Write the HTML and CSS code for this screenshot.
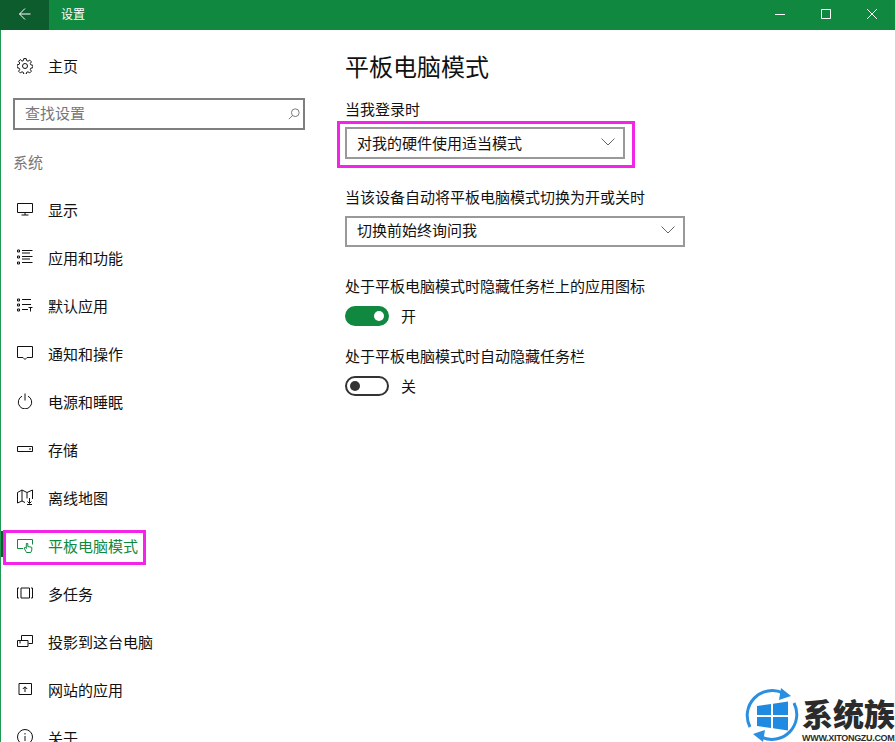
FILE: index.html
```html
<!DOCTYPE html>
<html lang="zh-CN">
<head>
  <meta charset="UTF-8" />
  <title>设置</title>
  <link rel="stylesheet" href="styles.css">
</head>
<body>
  <header class="titlebar">
    <div class="back">
      <svg width="14" height="14" viewBox="0 0 14 14"><path d="M1.500 7h11M7 1.500L1.500 7 7 12.500" /></svg>
    </div>
    <div class="app-title">设置</div>
    <div class="win-btns">
      <svg width="12" height="12" viewBox="0 0 12 12"><path d="M1 6.500h10" /></svg>
      <svg width="12" height="12" viewBox="0 0 12 12"><path d="M1.500 1.500h9v9h-9z" /></svg>
      <svg width="12" height="12" viewBox="0 0 12 12"><path d="M1 1l10 10M11 1L1 11" /></svg>
    </div>
  </header>

  <div class="window">
    <aside class="sidebar">
      <a class="nav-item home">
        <svg class="icon" viewBox="0 0 16 16"><circle cx="8" cy="8" r="2.500" /><path d="M6.800.6h2.400l.4 2 1.400.6 1.700-1.100 1.700 1.700-1.100 1.700.6 1.400 2 .4v2.400l-2 .4-.6 1.400 1.100 1.700-1.700 1.700-1.700-1.100-1.400.6-.4 2H6.800l-.4-2-1.400-.6-1.700 1.100-1.700-1.700 1.100-1.700-.6-1.400-2-.4V6.800l2-.4.6-1.400-1.100-1.700 1.700-1.700L5 3.200l1.400-.6z" /></svg>
        <span>主页</span>
      </a>
      <div class="search">
        <span>查找设置</span>
        <svg width="12" height="12" viewBox="0 0 14 14"><circle cx="8.500" cy="5.500" r="4.500" /><path d="M5.500 8.500L1 13" /></svg>
      </div>
      <div class="group-name">系统</div>

      <a class="nav-item">
        <svg class="icon" viewBox="0 0 16 16"><path d="M.5 2.500h15v9H.5zM8 11.500v2.500M4.500 14h7" /></svg>
        <span>显示</span>
      </a>
      <a class="nav-item">
        <svg class="icon" viewBox="0 0 16 16"><path d="M.5 1h2v2h-2zM.5 7h2v2h-2zM.5 13h2v2h-2zM5 1.500h10.500M5 4h8M5 7.500h10.500M5 10h8M5 13.500h10.500" /></svg>
        <span>应用和功能</span>
      </a>
      <a class="nav-item">
        <svg class="icon" viewBox="0 0 16 16"><path d="M.5 2h2v2h-2zM.5 7h2v2h-2zM.5 12h2v2h-2zM5 2.500h9M5 7.500h9M5 12.500h6M11.500 10.500h4M13.500 10.500v4" /></svg>
        <span>默认应用</span>
      </a>
      <a class="nav-item">
        <svg class="icon" viewBox="0 0 16 16"><path d="M.5 1.500h15v11H10l-2 2-2-2H.5z" /></svg>
        <span>通知和操作</span>
      </a>
      <a class="nav-item">
        <svg class="icon" viewBox="0 0 16 16"><path d="M5 3.200a6.700 6.700 0 1 0 6 0M8 .5v7" /></svg>
        <span>电源和睡眠</span>
      </a>
      <a class="nav-item">
        <svg class="icon" viewBox="0 0 16 16"><path d="M.5 5.500h15v5H.5zM12 8h2" /></svg>
        <span>存储</span>
      </a>
      <a class="nav-item">
        <svg class="icon" viewBox="0 0 16 16"><path d="M.5 3.500L5 1l5 2.500L15.500 1v9M.5 3.500V14L5 12l3 1.500M5 1v11M10 3.500v6M12.500 9v5M10.500 12.500l2 2 2-2M10 15.500h5" /></svg>
        <span>离线地图</span>
      </a>
      <a class="nav-item active">
        <svg class="icon" viewBox="0 0 16 16"><path d="M6 11.500H.5v-9h15v5M9 14.500l-2-3.500 1.500-.5.800 1V6.500h1.500v3l4 .8v2.700l-1 2.500H9.500z" /></svg>
        <span>平板电脑模式</span>
        <i class="mark"></i>
      </a>
      <a class="nav-item">
        <svg class="icon" viewBox="0 0 16 16"><path d="M4 3h8.500v10H4zM2 3H.5v10H2M14 3h1.500v10H14" /></svg>
        <span>多任务</span>
      </a>
      <a class="nav-item">
        <svg class="icon" viewBox="0 0 16 16"><path d="M4.500 7V2.500h11v8h-4M.5 7.500h10.500v6H.5zM3 10.500V7.500" /></svg>
        <span>投影到这台电脑</span>
      </a>
      <a class="nav-item">
        <svg class="icon" viewBox="0 0 16 16"><path d="M2 2.500h12.500v11H2zM8 11V6M5.800 8l2.200-2.200L10.200 8" /></svg>
        <span>网站的应用</span>
      </a>
      <a class="nav-item">
        <svg class="icon" viewBox="0 0 16 16"><circle cx="8" cy="8" r="7.500" /><path d="M8 7v5M8 4v1.500" /></svg>
        <span>关于</span>
      </a>
    </aside>

    <main class="content">
      <h1>平板电脑模式</h1>

      <label class="first">当我登录时</label>
      <div class="select short">
        <span>对我的硬件使用适当模式</span>
        <svg width="14" height="8" viewBox="0 0 14 8"><path d="M.5.500L7 7l6.500-6.500" /></svg>
        <i class="mark"></i>
      </div>

      <label class="second">当该设备自动将平板电脑模式切换为开或关时</label>
      <div class="select long">
        <span>切换前始终询问我</span>
        <svg width="14" height="8" viewBox="0 0 14 8"><path d="M.5.500L7 7l6.500-6.500" /></svg>
      </div>

      <label class="third">处于平板电脑模式时隐藏任务栏上的应用图标</label>
      <div class="toggle-row">
        <div class="toggle on"><b></b></div>
        <span>开</span>
      </div>

      <label class="fourth">处于平板电脑模式时自动隐藏任务栏</label>
      <div class="toggle-row">
        <div class="toggle"><b></b></div>
        <span>关</span>
      </div>
    </main>
  </div>

  <div class="watermark">
    <svg width="54" height="54" viewBox="0 0 54 54">
      <path class="ring" d="M5 39A25 25 0 0 1 38 5" />
      <path class="ring" d="M49 15A25 25 0 0 1 16 49" />
      <path class="tip" d="M36 0l10 8-12 4zM18 54L8 46l12-4z" />
      <path class="pane" d="M12 18l14-2v11H12zM28 15.700l15-2.200V27H28zM12 29h14v11l-14-2zM28 29h15v13.500l-15-2.200z" />
    </svg>
    <div class="brand">
      <div class="brand-name">系统族</div>
      <div class="brand-url">WWW.XITONGZU.COM</div>
    </div>
  </div>
</body>
</html>
```

FILE: styles.css
```css
body {
  margin: 0;
  height: 742px;
  overflow: hidden;
  position: relative;
  background: #fff;
  color: #111;
  font-family: "Noto Sans CJK SC", "Liberation Sans", sans-serif;
  font-size: 15px;
}
svg {
  fill: none;
  stroke: currentColor;
  stroke-width: 1;
}

.titlebar {
  display: flex;
  height: 30px;
  background: #118840;
  color: #fff;
}
.back {
  display: flex;
  align-items: center;
  justify-content: center;
  width: 49px;
  padding-bottom: 2px;
  box-sizing: border-box;
  background: #0d5c2d;
}
.app-title {
  margin-left: 12px;
  font-size: 12px;
  line-height: 27px;
}
.win-btns {
  display: flex;
  margin-left: auto;
  align-items: center;
  gap: 34px;
  padding: 0 17px 2px 0;
}

.window {
  display: flex;
  height: 712px;
  border-left: 1px solid #1f9a55;
}
.sidebar {
  width: 344px;
  flex: none;
  overflow: hidden;
  padding-top: 12px;
}
.nav-item {
  position: relative;
  display: flex;
  align-items: center;
  height: 48px;
  padding-left: 16px;
  color: #111;
}
.nav-item span {
  margin-left: 15px;
  padding-top: 2px;
  line-height: 20px;
}
.nav-item.home span {
  padding-top: 0;
}
.icon {
  width: 16px;
  height: 16px;
  flex: none;
}
.nav-item.active {
  color: #118840;
}
.nav-item.active::before {
  content: "";
  position: absolute;
  left: 0;
  top: 10px;
  width: 3px;
  height: 26px;
  background: #0d5c2d;
}
.nav-item .mark {
  left: 2px;
  top: 9px;
  width: 143px;
  height: 35px;
}
.mark {
  position: absolute;
  box-sizing: border-box;
  border: 3px solid #f323e8;
}

.search {
  display: flex;
  align-items: center;
  justify-content: space-between;
  box-sizing: border-box;
  width: 292px;
  height: 32px;
  margin: 8px 0 0 12px;
  padding: 0 3px 4px 10px;
  border: 2px solid #7f7f7f;
  color: #777;
}
.search svg {
  color: #666;
  margin-top: 4px;
}
.group-name {
  margin: 22px 0 13px 12px;
  line-height: 20px;
  color: #777;
}

.content {
  flex: 1;
}
h1 {
  margin: 18px 0 0;
  font-size: 24px;
  font-weight: 400;
  line-height: 36px;
}
label {
  display: block;
  line-height: 20px;
}
label.first {
  margin-top: 15px;
}
label.second {
  margin-top: 28px;
}
label.third {
  margin-top: 29px;
}
label.fourth {
  margin-top: 20px;
}
.select {
  position: relative;
  display: flex;
  align-items: center;
  justify-content: space-between;
  box-sizing: border-box;
  height: 32px;
  margin-top: 8px;
  padding: 0 8px 2px 10px;
  border: 2px solid #999;
}
.select.short {
  width: 280px;
}
.select.long {
  width: 340px;
  height: 31px;
  margin-top: 9px;
  padding-bottom: 4px;
}
.select svg {
  color: #666;
}
.select .mark {
  left: -10px;
  top: -8px;
  width: 298px;
  height: 47px;
}
.toggle-row {
  display: flex;
  align-items: center;
  margin-top: 10px;
}
.toggle-row span {
  margin-left: 12px;
  line-height: 20px;
}
.toggle {
  display: flex;
  align-items: center;
  box-sizing: border-box;
  width: 44px;
  height: 20px;
  padding: 0 3px;
  border: 2px solid #333;
  border-radius: 10px;
}
.toggle b {
  width: 10px;
  height: 10px;
  border-radius: 50%;
  background: #333;
}
.toggle.on {
  justify-content: flex-end;
  background: #118840;
  border-color: #118840;
}
.toggle.on b {
  background: #fff;
}

.watermark {
  position: absolute;
  right: 0;
  bottom: 0;
  display: flex;
  height: 54px;
  width: 150px;
  gap: 3px;
  background: #fff;
}
.ring {
  stroke: #2a8fe0;
  stroke-width: 3;
}
.tip {
  fill: #2a8fe0;
  stroke: none;
}
.pane {
  fill: #1f8ae2;
  stroke: none;
}
.brand {
  padding-top: 8px;
}
.brand-name {
  font-size: 31px;
  font-weight: 900;
  line-height: 34px;
  white-space: nowrap;
  color: #2b2b2b;
}
.brand-url {
  margin-top: 4px;
  font-family: "Liberation Sans", sans-serif;
  font-size: 9px;
  font-weight: 700;
  line-height: 8px;
  white-space: nowrap;
  letter-spacing: -.3px;
  color: #2b2b2b;
}
```
